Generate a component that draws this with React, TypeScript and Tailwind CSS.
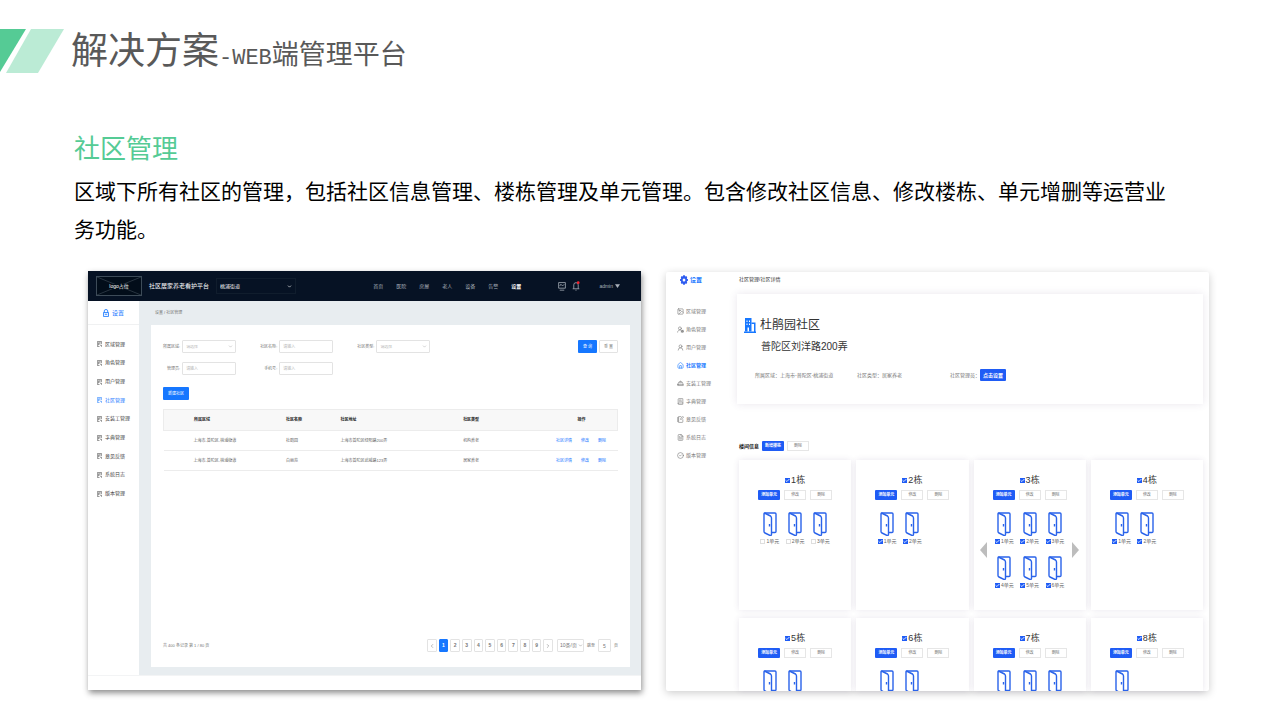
import React from 'react'
import { clsx } from 'clsx'
import {
  BookText,
  Check,
  ChevronDown,
  ChevronLeft,
  ChevronRight,
  CircleCheck,
  FileText,
  HardHat,
  House,
  Image,
  NotebookPen,
  UserRound,
  UserRoundCog,
  type LucideIcon,
} from 'lucide-react'

const menu: { label: string; icon: LucideIcon }[] = [
  { label: '区域管理', icon: Image },
  { label: '角色管理', icon: UserRoundCog },
  { label: '用户管理', icon: UserRound },
  { label: '社区管理', icon: House },
  { label: '安装工管理', icon: HardHat },
  { label: '字典管理', icon: BookText },
  { label: '意见反馈', icon: NotebookPen },
  { label: '系统日志', icon: FileText },
  { label: '版本管理', icon: CircleCheck },
]
const ACTIVE = '社区管理'

const topNav = ['首页', '医院', '房屋', '老人', '设备', '告警', '设置']

const communities = [
  { area: '上海市-普陀区-桃浦街道', name: '杜鹃园', address: '上海市普陀区绿阳路200弄', type: '机构养老' },
  { area: '上海市-普陀区-桃浦街道', name: '白丽苑', address: '上海市普陀区武威路123弄', type: '居家养老' },
]

type Building = { no: number; units: number; checked?: boolean; peek?: boolean }

// the last row only peeks in at the bottom of the panel
const buildings: Building[] = [
  { no: 1, units: 3 },
  { no: 2, units: 2, checked: true },
  { no: 3, units: 6, checked: true },
  { no: 4, units: 2, checked: true },
  { no: 5, units: 2, peek: true },
  { no: 6, units: 2, peek: true },
  { no: 7, units: 3, peek: true },
  { no: 8, units: 1, peek: true },
]

function MenuGlyph() {
  return (
    <svg viewBox="0 0 12 14" className="h-[6px] w-[5px] shrink-0" fill="none" stroke="currentColor" strokeWidth="1.3">
      <path d="M11 7V1H1v12h5M3.5 4h5M3.5 4v6M8.5 4L5 8M7 8l4 5M11 9v4" />
    </svg>
  )
}

function LockGlyph() {
  return (
    <svg viewBox="0 0 14 18" className="h-[8px] w-[6px]" fill="none" stroke="currentColor" strokeWidth="2">
      <path d="M3 8V4q0-3 4-3t4 3v4M1 8h12v9H1zM4 12h6" />
    </svg>
  )
}

function GearGlyph() {
  return (
    <svg viewBox="0 0 20 24" className="h-[10px] w-[8px]">
      <path
        fill="#2f5df0"
        fillRule="evenodd"
        d="M8 0h4l1 3 3-1 2 4-1 3 3 1v4l-3 1 1 3-2 4-3-1-1 3H8l-1-3-3 1-2-4 1-3-3-1v-4l3-1-1-3 2-4 3 1zM10 8a3.4 4 0 100 8 3.4 4 0 000-8z"
      />
    </svg>
  )
}

function BuildingGlyph() {
  return (
    <svg viewBox="0 0 24 30" className="h-[15px] w-[12px]" fill="#1677ff">
      <path fillRule="evenodd" d="M2 0h13v27H2zM5 5h2v3H5zM10 5h2v3h-2zM5 11h2v3H5zM10 11h2v3h-2zM7 19h3v8H7z" />
      <path d="M15 9h8v18h-3V12h-5zM0 27h24v3H0z" />
    </svg>
  )
}

function Door() {
  return (
    <svg
      viewBox="0 0 28 48"
      className="h-[24px] w-[14px]"
      fill="none"
      stroke="#2a63ea"
      strokeWidth="2.8"
      strokeLinejoin="round"
    >
      <path d="M3 2h21q2 0 2 2v35q0 2-2 2h-7" />
      <path d="M3 2Q2 2 2 4v35q0 2 2 3l10 5q3 0 3-2V12q0-2-2-4z" />
      <path d="M13 24v5" />
    </svg>
  )
}

function Tick({ checked }: { checked?: boolean }) {
  return (
    <span className="relative size-[5px] shrink-0">
      <input
        type="checkbox"
        defaultChecked={checked}
        className="peer block size-[5px] appearance-none border border-[#dedede] bg-white checked:border-[#1f5cf5] checked:bg-[#1f5cf5]"
      />
      <Check strokeWidth={4} className="pointer-events-none absolute inset-0 hidden size-[5px] text-white peer-checked:block" />
    </span>
  )
}

function TextField({ label }: { label: string }) {
  return (
    <label className="flex items-center justify-end gap-[2px]">
      <span>{label}:</span>
      <input
        type="text"
        placeholder="请输入"
        className="h-[13px] w-[54px] rounded-[1px] border border-[#e3e3e3] px-[3px] text-[4px] placeholder:text-[#b5b5b5]"
      />
    </label>
  )
}

function SelectField({ label }: { label: string }) {
  return (
    <label className="flex items-center justify-end gap-[2px]">
      <span>{label}:</span>
      <span className="relative">
        <select className="block h-[13px] w-[54px] appearance-none rounded-[1px] border border-[#e3e3e3] bg-white px-[3px] text-[4px] text-[#b5b5b5]">
          <option>请选择</option>
        </select>
        <ChevronDown className="pointer-events-none absolute top-[4px] right-[3px] size-[5px] text-[#999]" />
      </span>
    </label>
  )
}

function TopBar() {
  return (
    <header className="flex h-[30px] items-center bg-[#061224] pr-[21px] pl-[8px] text-[5px] text-[#aab1ba]">
      <div className="relative flex h-[20px] w-[46px] items-center justify-center border border-[#3d4b58] bg-[#020d1a]">
        <svg viewBox="0 0 46 20" preserveAspectRatio="none" className="absolute inset-0 size-full" stroke="#56636e" strokeWidth="0.5">
          <path d="M0 0L46 20M46 0L0 20" />
        </svg>
        <span className="relative bg-[#020d1a] text-[5px] text-white">logo占位</span>
      </div>
      <h3 className="ml-[7px] text-[6px] whitespace-nowrap text-white">社区居家养老看护平台</h3>
      <div className="relative ml-[7px]">
        <select
          aria-label="街道"
          className="block h-[16px] w-[80px] appearance-none border border-[#101d2d] bg-transparent pl-[3px] text-[5px] text-white"
        >
          <option>桃浦街道</option>
        </select>
        <ChevronDown strokeWidth={3} className="pointer-events-none absolute top-[6px] right-[4px] size-[5px] text-white" />
      </div>
      <nav className="ml-auto flex gap-[13px]">
        {topNav.map((item) => (
          <a key={item} href="#" className={clsx('whitespace-nowrap', item === '设置' && 'font-bold text-white')}>
            {item}
          </a>
        ))}
      </nav>
      <button type="button" aria-label="监控" className="ml-[37px]">
        <svg viewBox="0 0 14 16" className="h-[9px] w-[8px]" fill="none" stroke="currentColor" strokeWidth="1.4">
          <path d="M1 1h12v10H1zM3 7l2-3 3 3 3-3M3 14.5h8" />
        </svg>
      </button>
      <button type="button" aria-label="通知" className="ml-[6px]">
        <svg viewBox="0 0 14 18" className="h-[10px] w-[8px]" fill="none" stroke="currentColor" strokeWidth="1.4">
          <path d="M1 14h12M3 14V7q0-4 4-4t4 4v7M6 16.5h2" />
          <circle cx="11" cy="3" r="2.5" fill="#f5222d" stroke="none" />
        </svg>
      </button>
      <button type="button" className="ml-[19px] flex items-center gap-[2px]">
        admin
        <svg viewBox="0 0 8 6" className="h-[4px] w-[5px]" fill="currentColor">
          <path d="M0 0h8L4 6z" />
        </svg>
      </button>
    </header>
  )
}

function CommunityTable() {
  return (
    <table className="mt-[9px] w-full table-fixed text-left text-[4px] text-[#666]">
      <thead className="border border-[#ececec] bg-[#f8f8f8] text-[#222]">
        <tr className="h-[21px]">
          <th className="w-[27%] pl-[30px]">所属区域</th>
          <th className="w-[12%]">社区名称</th>
          <th className="w-[27%]">社区地址</th>
          <th className="w-[20%]">社区类型</th>
          <th className="w-[14%] pr-[8px] text-center">操作</th>
        </tr>
      </thead>
      <tbody>
        {communities.map((row) => (
          <tr key={row.name} className="h-[20px] border-b border-[#ececec]">
            <td className="pl-[30px]">{row.area}</td>
            <td>{row.name}</td>
            <td>{row.address}</td>
            <td>{row.type}</td>
            <td className="pl-[2px]">
              <div className="flex gap-[9px] text-[#1677ff]">
                <a href="#">社区详情</a>
                <a href="#">修改</a>
                <a href="#">删除</a>
              </div>
            </td>
          </tr>
        ))}
      </tbody>
    </table>
  )
}

function Pagination() {
  return (
    <div className="mt-auto flex h-[13px] items-center text-[4px] text-[#777]">
      <span>共 400 条记录 第 1 / 80 页</span>
      <div className="mr-[4px] ml-auto grid w-[126px] grid-cols-11 gap-[2px] text-[5px] font-bold">
        <button type="button" aria-label="上一页" className="flex h-[13px] items-center justify-center rounded-[1px] border border-[#e3e3e3]">
          <ChevronLeft className="size-[6px]" />
        </button>
        {[1, 2, 3, 4, 5, 6, 7, 8, 9].map((n) => (
          <button
            key={n}
            type="button"
            className={clsx(
              'h-[13px] rounded-[1px] border',
              n === 1 ? 'border-[#1677ff] bg-[#1677ff] text-white' : 'border-[#e3e3e3]',
            )}
          >
            {n}
          </button>
        ))}
        <button type="button" aria-label="下一页" className="flex h-[13px] items-center justify-center rounded-[1px] border border-[#e3e3e3]">
          <ChevronRight className="size-[6px]" />
        </button>
      </div>
      <div className="relative">
        <select aria-label="每页条数" className="block h-[13px] w-[27px] appearance-none rounded-[1px] border border-[#e3e3e3] pl-[2px] text-[5px]">
          <option>10条/页</option>
        </select>
        <ChevronDown className="pointer-events-none absolute top-[4px] right-px size-[5px]" />
      </div>
      <label className="ml-[3px] flex items-center gap-[3px]">
        跳至
        <input type="text" defaultValue="5" className="h-[13px] w-[13px] rounded-[1px] border border-[#e3e3e3] text-center text-[5px]" />
        页
      </label>
    </div>
  )
}

function ListPanel() {
  return (
    <section className="bg-white leading-none shadow-[1px_3px_6px_rgba(0,0,0,0.45)]">
      <TopBar />
      <div className="flex border-b border-[#f3f4f5]">
        <aside className="w-[51px] shrink-0 text-[5px] text-[#444]">
          <h4 className="flex h-[24px] items-center justify-center gap-[3px] border-b border-[#f0f1f2] text-[6px] text-[#1677ff]">
            <LockGlyph />
            设置
          </h4>
          <nav className="mt-[10px] grid h-[168px] auto-rows-fr pl-[9px]">
            {menu.map(({ label }) => (
              <a key={label} href="#" className={clsx('flex items-center gap-[3px] whitespace-nowrap', label === ACTIVE && 'text-[#1677ff]')}>
                <MenuGlyph />
                {label}
              </a>
            ))}
          </nav>
        </aside>
        <div className="min-w-0 flex-1 bg-[#e8edf0] pr-[11px] pb-[8px] pl-[12px]">
          <p className="flex h-[24px] items-center pl-[4px] text-[4px] text-[#777]">设置 / 社区管理</p>
          <div className="flex min-h-[342px] flex-col bg-white px-[12px] pt-[15px] pb-[15px]">
            <form className="flex items-start justify-between text-[4px] text-[#777]">
              <div className="grid grid-cols-[repeat(3,auto)] gap-x-[24px] gap-y-[9px]">
                <SelectField label="所属区域" />
                <TextField label="社区名称" />
                <SelectField label="社区类型" />
                <TextField label="管理员" />
                <TextField label="手机号" />
              </div>
              <div className="flex gap-[2px]">
                <button type="button" className="h-[13px] w-[19px] rounded-[1px] bg-[#1677ff] text-white">
                  查 询
                </button>
                <button type="button" className="h-[13px] w-[19px] rounded-[1px] border border-[#e3e3e3]">
                  重 置
                </button>
              </div>
            </form>
            <button type="button" className="mt-[12px] h-[13px] w-[26px] shrink-0 rounded-[1px] bg-[#1677ff] text-[4px] text-white">
              新建社区
            </button>
            <CommunityTable />
            <Pagination />
          </div>
        </div>
      </div>
      <div className="h-[14px]" />
    </section>
  )
}

function PrimaryButton({ children }: { children: React.ReactNode }) {
  return (
    <button type="button" className="h-[10px] w-[22px] rounded-[1px] bg-[#1f5cf5] text-[4px] font-bold whitespace-nowrap text-white">
      {children}
    </button>
  )
}

function GhostButton({ children }: { children: React.ReactNode }) {
  return (
    <button type="button" className="h-[10px] w-[22px] border border-[#e6e6e6] bg-white text-[4px] text-[#777]">
      {children}
    </button>
  )
}

function BuildingCard({ no, units, checked, peek }: Building) {
  const paged = units > 3
  return (
    <article
      className={clsx(
        'overflow-hidden bg-white pt-[15px] shadow-[0_0_6px_rgba(70,50,110,0.12)]',
        peek ? 'h-[73px]' : 'h-[150px]',
      )}
    >
      <label className="flex h-[11px] items-center justify-center gap-[1px] text-[9px] text-[#333]">
        <Tick checked />
        {no}栋
      </label>
      <div className="mt-[4px] flex justify-center gap-[4px]">
        <PrimaryButton>添加单元</PrimaryButton>
        <GhostButton>修改</GhostButton>
        <GhostButton>删除</GhostButton>
      </div>
      <div className="mt-[12px] flex items-center justify-center gap-[6px]">
        {paged && (
          <button type="button" aria-label="上一组">
            <svg viewBox="0 0 7 16" className="h-[16px] w-[7px]" fill="#bdbdbd">
              <path d="M7 0v16L0 8z" />
            </svg>
          </button>
        )}
        <div className="grid w-[73px] grid-cols-3 gap-x-[3px] gap-y-[12px]">
          {Array.from({ length: units }, (_, i) =>
            peek ? (
              <div key={i} className="flex justify-center">
                <Door />
              </div>
            ) : (
              <label key={i} className="flex flex-col items-center gap-[3px] text-[5px] text-[#666]">
                <Door />
                <span className="flex items-center gap-[1px] whitespace-nowrap">
                  <Tick checked={checked} />
                  {i + 1}单元
                </span>
              </label>
            ),
          )}
        </div>
        {paged && (
          <button type="button" aria-label="下一组">
            <svg viewBox="0 0 7 16" className="h-[16px] w-[7px]" fill="#bdbdbd">
              <path d="M0 0v16l7-8z" />
            </svg>
          </button>
        )}
      </div>
    </article>
  )
}

function DetailPanel() {
  return (
    <section className="mt-px flex rounded-[2px] bg-white leading-none shadow-[0_2px_9px_rgba(0,0,0,0.2)]">
      <aside className="w-[71px] shrink-0 pt-[2px] text-[5px] text-[#777]">
        <h4 className="flex h-[12px] items-center gap-[2px] pl-[14px] text-[6px] font-bold text-[#1677ff]">
          <GearGlyph />
          设置
        </h4>
        <nav className="mt-[16px] pl-[11px]">
          {menu.map(({ label, icon: Icon }) => (
            <a
              key={label}
              href="#"
              className={clsx('flex h-[18px] items-center gap-[2px] whitespace-nowrap', label === ACTIVE && 'font-bold text-[#1677ff]')}
            >
              <Icon className="size-[7px]" />
              {label}
            </a>
          ))}
        </nav>
      </aside>
      <div className="min-w-0 flex-1 pr-[6px]">
        <p className="flex h-[14px] items-center pl-[2px] text-[5px] text-[#333]">社区管理/社区详情</p>
        <div className="mt-[8px] h-[110px] bg-white px-[7px] pt-[21px] shadow-[0_0_8px_rgba(70,50,110,0.12)]">
          <div className="flex items-center gap-[4px]">
            <BuildingGlyph />
            <h3 className="text-[12px] leading-[20px] text-[#333]">杜鹃园社区</h3>
          </div>
          <p className="pl-[17px] text-[10px] leading-[24px] text-[#333]">普陀区刘洋路200弄</p>
          <div className="mt-[10px] grid grid-cols-[102fr_93fr_246fr] items-center pl-[11px] text-[5px] text-[#777]">
            <span className="whitespace-nowrap">所属区域：上海市-普陀区-桃浦街道</span>
            <span className="whitespace-nowrap">社区类型：居家养老</span>
            <span className="flex items-center whitespace-nowrap">
              社区管理员：
              <button type="button" className="h-[12px] w-[26px] rounded-[1px] bg-[#1f5cf5] font-bold text-white">
                点击设置
              </button>
            </span>
          </div>
        </div>
        <div className="mt-[37px] flex items-center gap-[3px] pl-[2px] text-[5px] text-[#222]">
          <h4 className="font-bold whitespace-nowrap">楼间信息</h4>
          <PrimaryButton>新增楼栋</PrimaryButton>
          <GhostButton>删除</GhostButton>
        </div>
        <div className="mt-[9px] grid grid-cols-4 gap-x-[5px] gap-y-[8px] pl-[2px]">
          {buildings.map((b) => (
            <BuildingCard key={b.no} {...b} />
          ))}
        </div>
      </div>
    </section>
  )
}

export default function App() {
  return (
    <main lang="zh-CN" className="min-h-screen bg-white pt-[29px] pb-[29px] font-['Liberation_Sans','Noto_Sans_CJK_SC',sans-serif]">
      <header className="flex h-[44px] items-center gap-[7px]">
        <svg viewBox="0 0 64 44" className="h-[44px] w-[64px]">
          <path d="M0 0h26L0 43z" fill="#55cb95" />
          <path d="M31 0h33L38 44H6z" fill="#bbebd5" />
        </svg>
        <h1 className="flex items-baseline pt-[8px] text-[37px] leading-[44px] text-[#595959]">
          解决方案
          <span className="font-['Liberation_Mono',monospace] text-[22px]">-WEB</span>
          <span className="text-[27px]">端管理平台</span>
        </h1>
      </header>
      <div className="pr-[98px] pl-[74px]">
        <h2 className="mt-[57px] text-[26px] leading-[38px] text-[#55cb95]">社区管理</h2>
        <p className="mt-[5px] text-[21px] leading-[38px] text-black">
          区域下所有社区的管理，包括社区信息管理、楼栋管理及单元管理。包含修改社区信息、修改楼栋、单元增删等运营业务功能。
        </p>
      </div>
      <div className="mt-[22px] grid grid-cols-[553fr_543fr] items-start gap-[25px] pr-[71px] pl-[88px]">
        <ListPanel />
        <DetailPanel />
      </div>
    </main>
  )
}
